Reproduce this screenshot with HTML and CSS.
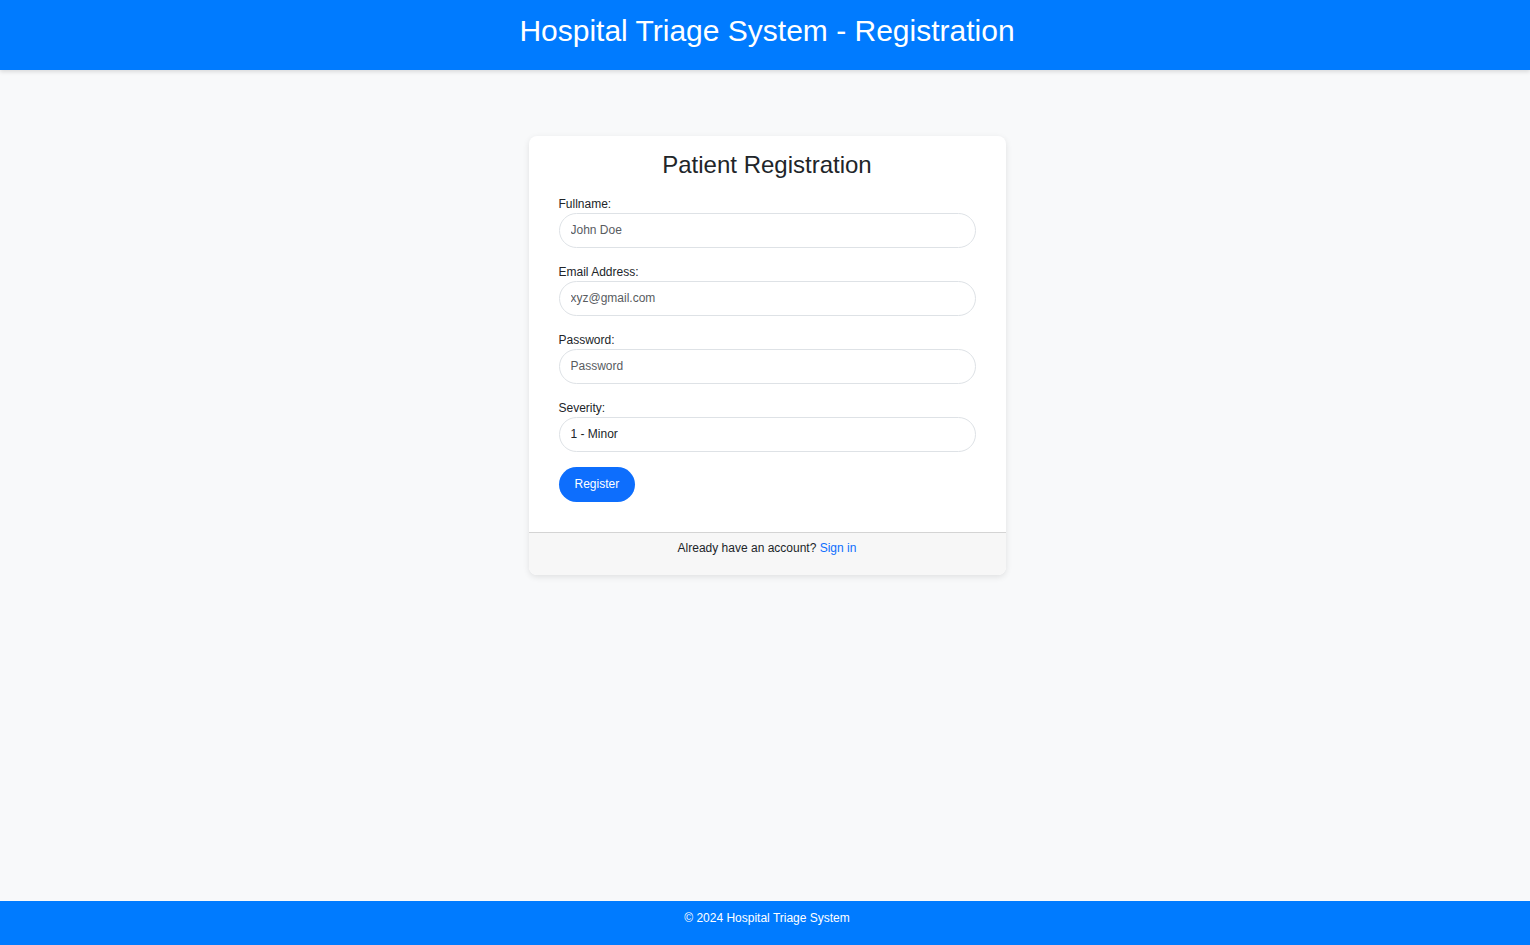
FILE: index.html
```html
<!DOCTYPE html>
<html lang="en">
<head>
<meta charset="utf-8">
<title>Registration</title>
<link rel="stylesheet" href="styles.css">
</head>
<body>
<div class="page">
  <header class="topbar">
    <h1 class="topbar-title">Hospital Triage System - Registration</h1>
  </header>
  <main class="main">
    <div class="card">
      <div class="card-body">
        <h2 class="card-title">Patient Registration</h2>
        <form class="form">
          <div class="field">
            <label class="label">Fullname:</label>
            <input class="input" type="text" placeholder="John Doe">
          </div>
          <div class="field">
            <label class="label">Email Address:</label>
            <input class="input" type="email" placeholder="xyz@gmail.com">
          </div>
          <div class="field">
            <label class="label">Password:</label>
            <input class="input" type="password" placeholder="Password">
          </div>
          <div class="field">
            <label class="label">Severity:</label>
            <select class="input select">
              <option>1 - Minor</option>
            </select>
          </div>
          <button type="button" class="btn">Register</button>
        </form>
      </div>
      <div class="card-footer">
        Already have an account? <a class="link" href="#">Sign in</a>
      </div>
    </div>
  </main>
  <footer class="footer">© 2024 Hospital Triage System</footer>
</div>
</body>
</html>
```

FILE: styles.css
```css
* { box-sizing: border-box; }
html, body { margin: 0; padding: 0; }
body {
  font-family: "Liberation Sans", Arial, sans-serif;
  background: #f8f9fa;
  color: #212529;
}
.page {
  min-height: 100vh;
  display: flex;
  flex-direction: column;
}
.topbar {
  height: 70px;
  background: #007bff;
  display: flex;
  align-items: center;
  justify-content: center;
  padding-left: 4px;
  box-shadow: 0 2px 4px rgba(0,0,0,0.12);
}
.topbar-title {
  margin: 0 0 8px 0;
  color: #fff;
  font-size: 30px;
  font-weight: normal;
}
.main {
  flex: 1;
  display: flex;
  justify-content: center;
  align-items: flex-start;
  padding: 66px 0 0 4px;
}
.card {
  width: 477px;
  background: #fff;
  border-radius: 8px;
  box-shadow: 0 2px 6px rgba(0,0,0,0.1);
  overflow: hidden;
}
.card-body {
  padding: 14px 30px 30px;
}
.card-title {
  margin: 0 0 16px;
  text-align: center;
  font-size: 24px;
  line-height: 29px;
  font-weight: normal;
  color: #212529;
}
.form { display: flex; flex-direction: column; }
.field {
  display: flex;
  flex-direction: column;
  margin-bottom: 15px;
}
.label {
  font-size: 12px;
  line-height: 14px;
  padding-top: 2px;
  margin-bottom: 2px;
  color: #212529;
}
.input {
  height: 35px;
  border: 1px solid #dee2e6;
  border-radius: 18px;
  padding: 0 11px 2px;
  font-family: "Liberation Sans", Arial, sans-serif;
  font-size: 12px;
  color: #212529;
  background: #fff;
  outline: none;
}
.input::placeholder { color: #595c5f; }
.select {
  appearance: none;
  -webkit-appearance: none;
}
.btn {
  align-self: flex-start;
  height: 35px;
  padding: 0 16px 2px;
  border: none;
  border-radius: 18px;
  background: #0d6efd;
  color: #fff;
  font-family: "Liberation Sans", Arial, sans-serif;
  font-size: 12px;
  font-weight: normal;
}
.card-footer {
  border-top: 1px solid #d4d4d4;
  background: #f7f7f7;
  padding: 8px 0 20px;
  text-align: center;
  font-size: 12px;
  line-height: 14px;
}
.link { color: #0d6efd; text-decoration: none; }
.footer {
  height: 44px;
  background: #007bff;
  color: #fff;
  font-size: 12px;
  text-align: center;
  padding: 10px 0 0 4px;
}
```
